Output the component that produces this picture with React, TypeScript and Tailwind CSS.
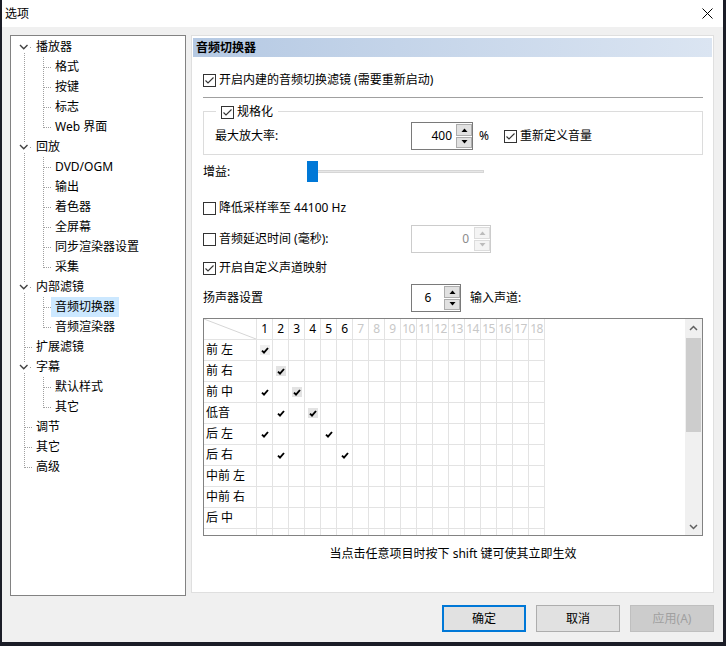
import React from 'react';

type Node = { label: string; level: number; exp?: boolean; sel?: boolean };

const tree: Node[] = [
  { label: '播放器', level: 0, exp: true },
  { label: '格式', level: 1 },
  { label: '按键', level: 1 },
  { label: '标志', level: 1 },
  { label: 'Web 界面', level: 1 },
  { label: '回放', level: 0, exp: true },
  { label: 'DVD/OGM', level: 1 },
  { label: '输出', level: 1 },
  { label: '着色器', level: 1 },
  { label: '全屏幕', level: 1 },
  { label: '同步渲染器设置', level: 1 },
  { label: '采集', level: 1 },
  { label: '内部滤镜', level: 0, exp: true },
  { label: '音频切换器', level: 1, sel: true },
  { label: '音频渲染器', level: 1 },
  { label: '扩展滤镜', level: 0 },
  { label: '字幕', level: 0, exp: true },
  { label: '默认样式', level: 1 },
  { label: '其它', level: 1 },
  { label: '调节', level: 0 },
  { label: '其它', level: 0 },
  { label: '高级', level: 0 },
];

const groups: [number, number][] = [
  [0, 4],
  [5, 11],
  [12, 14],
  [16, 18],
];

function TreeLines() {
  const cy = (i: number) => 10 + 20 * i;
  const dot = { stroke: '#a0a0a0', strokeWidth: 1, strokeDasharray: '1 1' };
  return (
    <svg className="pointer-events-none absolute left-0 top-[1px]" width="174" height="558">
      <line x1="13.5" y1="16" x2="13.5" y2={cy(21) + 1} {...dot} />
      {groups.map(([p, c]) => (
        <line key={p} x1="32.5" y1={cy(p) + 10} x2="32.5" y2={cy(c) + 1} {...dot} />
      ))}
      {tree.map((n, i) => {
        const y = cy(i) + 0.5;
        if (n.level === 1) return <line key={i} x1="33" y1={y} x2="41" y2={y} {...dot} />;
        if (n.exp)
          return (
            <g key={i}>
              <rect x="8" y={cy(i) - 5} width="10" height="10" fill="#ffffff" />
              <path
                d={`M9 ${cy(i) - 2} L12.75 ${cy(i) + 1.75} L16.5 ${cy(i) - 2}`}
                fill="none"
                stroke="#404040"
                strokeWidth="1.4"
              />
              <line x1="19" y1={y} x2="21" y2={y} {...dot} />
            </g>
          );
        return <line key={i} x1="14" y1={y} x2="22" y2={y} {...dot} />;
      })}
    </svg>
  );
}

function Tree() {
  return (
    <div className="relative h-[561px] w-[176px] shrink-0 border border-[#828282] bg-white">
      <TreeLines />
      <div className="flex flex-col pt-[1px]">
        {tree.map((n, i) => (
          <div key={i} className={n.level === 0 ? 'flex h-[20px] items-center pl-[21px]' : 'flex h-[20px] items-center pl-[40px]'}>
            <span className={n.sel ? 'bg-[#cce8ff] px-[4px] leading-[20px]' : 'px-[4px] leading-[20px]'}>{n.label}</span>
          </div>
        ))}
      </div>
    </div>
  );
}

function CheckBox({ checked }: { checked?: boolean }) {
  return (
    <span className="flex h-[13px] w-[13px] shrink-0 items-center justify-center border border-[#333333] bg-white">
      {checked && (
        <svg width="11" height="11" viewBox="0 0 11 11">
          <path d="M1.5 5.5 L4 8 L9.5 2.5" fill="none" stroke="#333333" strokeWidth="1.1" />
        </svg>
      )}
    </span>
  );
}

function CheckLabel({ checked, children }: { checked?: boolean; children: React.ReactNode }) {
  return (
    <div className="flex h-[16px] items-center gap-[3px]">
      <CheckBox checked={checked} />
      <span className="whitespace-nowrap leading-[16px]">{children}</span>
    </div>
  );
}

function Arrow({ up, color }: { up?: boolean; color: string }) {
  return (
    <svg width="7" height="4" viewBox="0 0 7 4">
      <path d={up ? 'M0.5 4 L3.5 0.5 L6.5 4Z' : 'M0.5 0 L3.5 3.5 L6.5 0Z'} fill={color} />
    </svg>
  );
}

function SpinButtons({ disabled }: { disabled?: boolean }) {
  const cls = disabled
    ? 'flex flex-1 items-center justify-center border border-[#dcdcdc] bg-[#f4f4f4]'
    : 'flex flex-1 items-center justify-center border border-[#adadad] bg-[#e1e1e1]';
  const c = disabled ? '#bcbcbc' : '#000000';
  return (
    <div className="flex w-[16px] flex-col gap-px py-px">
      <div className={cls}>
        <Arrow up color={c} />
      </div>
      <div className={cls}>
        <Arrow color={c} />
      </div>
    </div>
  );
}

function Check({ shade }: { shade?: string }) {
  return (
    <span className={shade ? `flex h-[10px] w-[10px] items-center justify-center ${shade}` : 'flex h-[10px] w-[10px] items-center justify-center'}>
      <svg width="8" height="7" viewBox="0 0 8 7">
        <path d="M1 3.6 L3 5.6 L7 1" fill="none" stroke="#000000" strokeWidth="1.9" />
      </svg>
    </span>
  );
}

const rowLabels = ['前 左', '前 右', '前 中', '低音', '后 左', '后 右', '中前 左', '中前 右', '后 中', ''];
const checks: Record<number, number[]> = { 0: [1], 1: [2], 2: [1, 3], 3: [2, 4], 4: [1, 5], 5: [2, 6] };
const shaded: Record<string, string> = { '0-1': 'bg-[#f0f0f0]', '1-2': 'bg-[#e3e3e3]', '2-3': 'bg-[#e3e3e3]', '3-4': 'bg-[#e3e3e3]' };
const cols = Array.from({ length: 18 }, (_, i) => i + 1);

function MatrixGrid() {
  return (
    <div className="flex h-[218px] w-[500px] border border-[#828282] bg-white">
      <div className="flex flex-1 flex-col overflow-hidden">
        <div className="flex h-[21px] shrink-0">
          <div className="h-[21px] w-[53px] shrink-0 border-b border-r border-[#e3e3e3]">
            <svg width="52" height="20" viewBox="0 0 52 20">
              <line x1="0" y1="0" x2="52" y2="20" stroke="#d6d6d6" strokeWidth="1" />
            </svg>
          </div>
          {cols.map((c) => (
            <div
              key={c}
              className={
                c <= 6
                  ? 'flex h-[21px] w-[16px] shrink-0 items-center justify-center border-b border-r border-[#e3e3e3] text-[12px] leading-[16px] tracking-[-0.5px] text-black'
                  : 'flex h-[21px] w-[16px] shrink-0 items-center justify-center border-b border-r border-[#e3e3e3] text-[12px] leading-[16px] tracking-[-0.5px] text-[#c8c8c8]'
              }
            >
              {c}
            </div>
          ))}
        </div>
        {rowLabels.map((label, r) => (
          <div key={r} className="flex h-[21px] shrink-0">
            <div className="flex h-[21px] w-[53px] shrink-0 items-center border-b border-r border-[#e3e3e3] pl-[2px] leading-[16px]">
              {label}
            </div>
            {cols.map((c) => (
              <div key={c} className="flex h-[21px] w-[16px] shrink-0 items-center justify-center border-b border-r border-[#e3e3e3]">
                {checks[r]?.includes(c) && <Check shade={shaded[`${r}-${c}`]} />}
              </div>
            ))}
          </div>
        ))}
      </div>
      <div className="flex w-[17px] shrink-0 flex-col bg-[#f0f0f0]">
        <div className="flex h-[17px] items-center justify-center">
          <svg width="9" height="6" viewBox="0 0 9 6">
            <path d="M1 5 L4.5 1.5 L8 5" fill="none" stroke="#606060" strokeWidth="1.5" />
          </svg>
        </div>
        <div className="flex-1">
          <div className="mx-auto mt-[2px] h-[94px] w-[15px] bg-[#cdcdcd]" />
        </div>
        <div className="flex h-[17px] items-center justify-center">
          <svg width="9" height="6" viewBox="0 0 9 6">
            <path d="M1 1 L4.5 4.5 L8 1" fill="none" stroke="#606060" strokeWidth="1.5" />
          </svg>
        </div>
      </div>
    </div>
  );
}

function RightPanel() {
  return (
    <div className="ml-[5px] flex h-[558px] w-[523px] shrink-0 flex-col border border-[#dfdfdf] bg-white px-px pt-[1px]">
      <div className="mt-px flex h-[19px] items-center bg-linear-to-r from-[#b5c9e3] to-[#dbe5f2] pl-[3px] font-bold leading-[16px]">
        音频切换器
      </div>
      <div className="flex flex-col pl-[10px] pr-[9px]">
        <div className="mt-[15px]">
          <CheckLabel checked>开启内建的音频切换滤镜 (需要重新启动)</CheckLabel>
        </div>
        <div className="mt-[9px] h-px bg-[#a0a0a0]" />
        <div className="relative mt-[13px] h-[44px] border border-[#dcdcdc] pl-[11px] pt-[10px]">
          <div className="absolute -top-[8px] left-[12px] bg-white px-[5px]">
            <CheckLabel checked>规格化</CheckLabel>
          </div>
          <div className="flex h-[28px] items-center">
            <span className="w-[196px] leading-[16px]">最大放大率:</span>
            <div className="flex h-[28px] w-[62px] border border-[#7a7a7a] bg-white">
              <div className="flex flex-1 items-center justify-end pr-[4px] leading-[16px]">400</div>
              <SpinButtons />
            </div>
            <span className="w-[31px] pl-[6px] leading-[16px]">%</span>
            <CheckLabel checked>重新定义音量</CheckLabel>
          </div>
        </div>
        <div className="mt-[6px] flex h-[21px] items-center">
          <span className="w-[104px] leading-[16px]">增益:</span>
          <div className="relative h-[21px] w-[177px]">
            <div className="absolute left-0 right-0 top-[9px] h-[3px] border border-[#d6d6d6] bg-[#e7e7e7]" />
            <div className="relative h-[21px] w-[11px] bg-[#0078d7]" />
          </div>
        </div>
        <div className="mt-[18px]">
          <CheckLabel>降低采样率至 44100 Hz</CheckLabel>
        </div>
        <div className="mt-[9px] flex h-[28px] items-center">
          <div className="w-[208px]">
            <CheckLabel>音频延迟时间 (毫秒):</CheckLabel>
          </div>
          <div className="flex h-[28px] w-[80px] border border-[#cccccc] bg-white">
            <div className="flex flex-1 items-center justify-end pr-[5px] leading-[16px] text-[#8c8c8c]">0</div>
            <SpinButtons disabled />
          </div>
        </div>
        <div className="mt-[7px]">
          <CheckLabel checked>开启自定义声道映射</CheckLabel>
        </div>
        <div className="mt-[8px] flex h-[28px] items-center">
          <span className="w-[208px] leading-[16px]">扬声器设置</span>
          <div className="flex h-[28px] w-[50px] border border-[#7a7a7a] bg-white">
            <div className="flex flex-1 items-center justify-center leading-[16px]">6</div>
            <SpinButtons />
          </div>
          <span className="ml-[9px] leading-[16px]">输入声道:</span>
        </div>
        <div className="mt-[6px]">
          <MatrixGrid />
        </div>
        <div className="mt-[10px] text-center leading-[16px]">当点击任意项目时按下 shift 键可使其立即生效</div>
      </div>
    </div>
  );
}

export default function App() {
  return (
    <div className="h-[646px] w-[726px] overflow-hidden bg-[#1b1d27] font-['Noto_Sans','Noto_Sans_CJK_SC',sans-serif] text-[12px] text-black">
      <div className="ml-[2px] flex h-[642px] w-[721px] flex-col bg-[#f0f0f0]">
        <div className="flex h-[27px] shrink-0 items-center justify-between bg-white pl-[3px] pr-[10px]">
          <span className="leading-[16px]">选项</span>
          <svg width="11" height="11" viewBox="0 0 11 11">
            <path d="M0.5 0.5 L10.5 10.5 M10.5 0.5 L0.5 10.5" stroke="#000000" strokeWidth="1" />
          </svg>
        </div>
        <div className="flex items-start pl-[8px] pt-[8px]">
          <Tree />
          <RightPanel />
        </div>
        <div className="mt-[9px] flex justify-end gap-[10px] pr-[9px]">
          <button className="h-[27px] w-[84px] border-2 border-[#0078d7] bg-[#e1e1e1] leading-[16px]">确定</button>
          <button className="h-[27px] w-[84px] border border-[#adadad] bg-[#e1e1e1] leading-[16px]">取消</button>
          <button className="h-[27px] w-[84px] border border-[#bfbfbf] bg-[#cccccc] leading-[16px] text-[#a0a0a0]">应用(A)</button>
        </div>
      </div>
    </div>
  );
}
